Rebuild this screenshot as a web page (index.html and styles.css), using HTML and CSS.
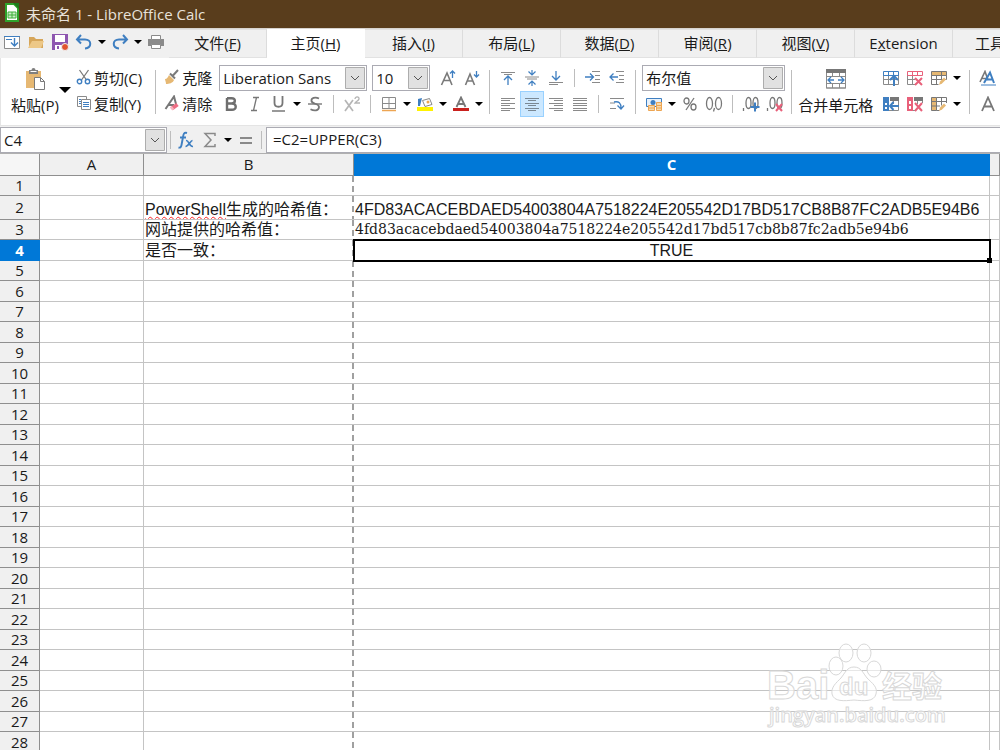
FILE: index.html
```
<!DOCTYPE html>
<html lang="zh-CN">
<head>
    <meta charset="UTF-8">
    <meta name="viewport" content="width=device-width, initial-scale=1.0">
    <title>未命名 1 - LibreOffice Calc</title>
    <link rel="stylesheet" href="styles.css">
</head>
<body>
    <header class="titlebar">
        <svg class="app-icon" width="14" height="20" viewBox="0 0 14 20">
            <path d="M1 1h8l4 4v13H1z" fill="#fff" stroke="#2fa32b" stroke-width="2"/>
            <path d="M8 0h6v6z" fill="#1f7a1c"/>
            <path d="M3 9h8v6H3z" fill="#c9efc5"/>
            <path d="M3 9h8v6H3zM3 12h8M7 9v6" fill="none" stroke="#3faf3a"/>
        </svg>
        <span>未命名 1 - LibreOffice Calc</span>
    </header>

    <div class="tabbar">
        <div class="quick">
            <button class="qbtn" aria-label="菜单栏">
                <svg width="18" height="18" viewBox="0 0 18 18" fill="none"><path d="M1.500 3.500h15v12h-15z" stroke="#8a8a8a" fill="#fff"/><path d="M1 3.500h16M3 6.500h6" stroke="#3f7fc1"/><path d="M11.500 5v8M8 9.500l3.500 3.500L15 9.500" stroke="#3f7fc1" stroke-width="1.400"/></svg>
            </button>
            <button class="qbtn" aria-label="打开">
                <svg width="18" height="18" viewBox="0 0 18 18"><path d="M2 4h5l2 2h7v9H2z" fill="#d6a65a"/><path d="M5 8h12l-3 7H1z" fill="#edc887"/></svg>
            </button>
            <button class="qbtn" aria-label="保存">
                <svg width="18" height="18" viewBox="0 0 18 18"><path d="M1 1h16v16H1z" fill="#8e56b0"/><path d="M4 2h10v7H4zM4 12h8v5H4z" fill="#fff"/><path d="M6 13h2v3H6z" fill="#8e56b0"/><circle cx="14" cy="14" r="3.500" fill="#e0532f" stroke="#f0f0f0"/></svg>
            </button>
            <button class="qbtn" aria-label="撤销">
                <svg width="18" height="18" viewBox="0 0 18 18" fill="none" stroke="#3f7fc1" stroke-width="2"><path d="M6 2L2 6.500l4 4M2 6.500h8c7 0 7 8.500 0 9"/></svg>
            </button>
            <button class="drop" aria-label="撤销选项"></button>
            <button class="qbtn" aria-label="恢复">
                <svg width="18" height="18" viewBox="0 0 18 18" fill="none" stroke="#3f7fc1" stroke-width="2"><path d="M12 2l4 4.500-4 4M16 6.500H8c-7 0-7 8.500 0 9"/></svg>
            </button>
            <button class="drop" aria-label="恢复选项"></button>
            <button class="qbtn" aria-label="打印">
                <svg width="18" height="18" viewBox="0 0 18 18"><path d="M1 6h16v7H1z" fill="#8a8a8a"/><path d="M4.500 2.500h9v4h-9zM4.500 11.500h9v4h-9z" fill="#fff" stroke="#8a8a8a"/></svg>
            </button>
        </div>
        <nav class="tabs">
            <a href="#">文件(<u>F</u>)</a>
            <a href="#" class="active">主页(<u>H</u>)</a>
            <a href="#">插入(<u>I</u>)</a>
            <a href="#">布局(<u>L</u>)</a>
            <a href="#">数据(<u>D</u>)</a>
            <a href="#">审阅(<u>R</u>)</a>
            <a href="#">视图(<u>V</u>)</a>
            <a href="#">E<u>x</u>tension</a>
            <a href="#" class="last">工具</a>
        </nav>
    </div>

    <div class="ribbon">
        <button class="big paste">
            <svg width="20" height="22" viewBox="0 0 20 22"><path d="M1 3h15v17H1z" fill="#e6b873"/><path d="M4 2h2.500a2 2 0 0 1 4 0H13v4H4z" fill="#7f7f7f"/><path d="M5.500 3.500h6" stroke="#fff"/><path d="M9.500 9.500h6l4 4v8h-10z" fill="#fff" stroke="#7a7a7a"/><path d="M15.500 9.500v4h4" fill="none" stroke="#7a7a7a"/></svg>
            <span>粘贴(P)</span>
        </button>
        <button class="drop large" aria-label="粘贴选项"></button>
        <div class="stack labels">
            <button class="text-tool">
                <svg width="16" height="16" viewBox="0 0 16 16" fill="none"><path d="M3.500 1l7 10M12.500 1l-7 10" stroke="#7a7a7a" stroke-width="1.300"/><circle cx="3.500" cy="12.500" r="2.200" stroke="#3f7fc1" stroke-width="1.400"/><circle cx="11.500" cy="12.500" r="2.200" stroke="#3f7fc1" stroke-width="1.400"/></svg>
                剪切(C)
            </button>
            <button class="text-tool">
                <svg width="16" height="16" viewBox="0 0 16 16" fill="none"><path d="M1.500 1.500h9v10h-9z" stroke="#8a8a8a"/><path d="M3 4.500h2M3 6.500h2M3 8.500h2" stroke="#3f7fc1"/><path d="M5.500 4.500h9v10h-9z" fill="#fff" stroke="#8a8a8a"/><path d="M7 7.500h6M7 9.500h6M7 11.500h6" stroke="#3f7fc1"/></svg>
                复制(Y)
            </button>
        </div>
        <span class="sep tall wide"></span>
        <div class="stack">
            <button class="text-tool">
                <svg width="16" height="16" viewBox="0 0 16 16"><path d="M14 1L9 6.500M6 4.500l5 5" stroke="#7a7a7a" stroke-width="2"/><path d="M5 6l5 5c-1 3-5 4-8 4 0-2-1-4-1-5 2 0 3-2 4-4z" fill="#e6b873"/></svg>
                克隆
            </button>
            <button class="text-tool">
                <svg width="16" height="16" viewBox="0 0 16 16" fill="none"><path d="M1.500 14L10 1.500 12 9M4 10h6" stroke="#777" stroke-width="2"/><path d="M8 13.500l5.500-4" stroke="#ed6d83" stroke-width="4"/><path d="M7 14l2-1.500" stroke="#f6b4be" stroke-width="4"/></svg>
                清除
            </button>
        </div>

        <div class="stack font-group">
            <div class="row">
                <select class="combo font-name" aria-label="字体名称"><option>Liberation Sans</option></select>
                <select class="combo font-size" aria-label="字号"><option>10</option></select>
                <button class="tool" aria-label="增大字号">
                    <svg width="16" height="16" viewBox="0 0 16 16" fill="none"><path d="M1.500 15L7 3l5 12M4 10.500h6.500" stroke="#7a7a7a" stroke-width="1.600"/><path d="M12.500 8V1M10 3.500L12.500 1 15 3.500" stroke="#3f7fc1" stroke-width="1.300"/></svg>
                </button>
                <button class="tool" aria-label="减小字号">
                    <svg width="16" height="16" viewBox="0 0 16 16" fill="none"><path d="M1.500 15L6 4l4.500 11M3.500 11h5.500" stroke="#7a7a7a" stroke-width="1.600"/><path d="M12.500 1v6M10 4.500L12.500 7 15 4.500" stroke="#3f7fc1" stroke-width="1.300"/></svg>
                </button>
            </div>
            <div class="row">
                <button class="tool" aria-label="粗体"><svg width="16" height="16" viewBox="0 0 16 16" fill="none" stroke="#6f6f6f" stroke-width="2.400"><path d="M4 2.200h4.500c4.500 0 4.500 5.300 0 5.300H4h5c5 0 5 6.300 0 6.300H4V2"/></svg></button>
                <button class="tool" aria-label="斜体"><svg width="16" height="16" viewBox="0 0 16 16" fill="none" stroke="#777" stroke-width="1.300"><path d="M6 1.500h6M4 14.500h6M9.500 1.500l-3 13"/></svg></button>
                <button class="tool" aria-label="下划线"><svg width="16" height="16" viewBox="0 0 16 16" fill="none" stroke="#777"><path d="M3.500 0v7c0 5 8 5 8 0V0" stroke-width="1.800"/><path d="M1 15h13" stroke-width="1.500"/></svg></button>
                <button class="drop" aria-label="下划线样式"></button>
                <button class="tool" aria-label="删除线"><svg width="16" height="16" viewBox="0 0 16 16" fill="none" stroke="#777"><path d="M12 2.500C8 .5 4 2 4.500 5c.5 3.500 7.500 2 7.500 6 0 4-5 4-8.500 2.300" stroke-width="1.800"/><path d="M1 8h14" stroke-width="1.400"/></svg></button>
                <span class="sep"></span>
                <button class="tool" aria-label="上标"><svg width="18" height="16" viewBox="0 0 18 16" fill="none" stroke="#b5b5b5" stroke-width="1.700"><path d="M2 4l8 11M10 4L2 15"/><path d="M12 3c0-3 4.500-2.500 4 0-.3 1.500-3 2.500-4 4h5" stroke-width="1.300"/></svg></button>
                <span class="sep"></span>
                <button class="tool" aria-label="边框"><svg width="16" height="16" viewBox="0 0 16 16" fill="none"><path d="M1.500 1.500h13V13M1.500 1.500V13M1 7.500h14M8 2v11M1 12.500h14" stroke="#8a8a8a"/><path d="M1 14.500h14" stroke="#eda552" stroke-width="1.500"/></svg></button>
                <button class="drop" aria-label="边框选项"></button>
                <button class="tool" aria-label="背景色"><svg width="16" height="16" viewBox="0 0 16 16"><path d="M5.500 4.500l7-2 2.500 6-7 2z" fill="#fff" stroke="#888"/><path d="M1 3l4-1-2 8H1z" fill="#3f7fc1"/><circle cx="11" cy="6" r="1.500" fill="#eda552"/><path d="M0 11h16v4H0z" fill="#fff200"/></svg></button>
                <button class="drop" aria-label="背景色选项"></button>
                <button class="tool" aria-label="字体颜色"><svg width="16" height="16" viewBox="0 0 16 16" fill="none"><path d="M3.500 11L8 1.500 12.500 11M5 8h6" stroke="#777" stroke-width="1.800"/><path d="M0 13.500h16" stroke="#c9211e" stroke-width="3"/></svg></button>
                <button class="drop" aria-label="字体颜色选项"></button>
            </div>
        </div>
        <span class="sep tall tight"></span>

        <div class="stack">
            <div class="row">
                <button class="tool" aria-label="顶端对齐"><svg width="16" height="16" viewBox="0 0 16 16" fill="none"><path d="M1 2.500h14M4 4.500h8" stroke="#8a8a8a"/><path d="M8 15V6M4 10l4-4 4 4" stroke="#3f7fc1" stroke-width="1.300"/></svg></button>
                <button class="tool" aria-label="垂直居中"><svg width="16" height="16" viewBox="0 0 16 16" fill="none"><path d="M1 7h14M3 9h10" stroke="#8a8a8a"/><path d="M8 0v5M4.500 1.500L8 5l3.500-3.500M8 16v-5M4.500 14.500L8 11l3.500 3.500" stroke="#3f7fc1" stroke-width="1.200"/></svg></button>
                <button class="tool" aria-label="底端对齐"><svg width="16" height="16" viewBox="0 0 16 16" fill="none"><path d="M1 12.500h14M1 14.500h9" stroke="#8a8a8a"/><path d="M8 1v9M4 6l4 4 4-4" stroke="#3f7fc1" stroke-width="1.300"/></svg></button>
                <span class="sep"></span>
                <button class="tool" aria-label="增加缩进"><svg width="16" height="16" viewBox="0 0 16 16" fill="none"><path d="M7 1.500h8M10 5.500h5M10 9.500h5M7 12.500h8" stroke="#8a8a8a"/><path d="M0 7h8M5 3.500L8.500 7 5 10.500" stroke="#3f7fc1" stroke-width="1.300"/></svg></button>
                <button class="tool" aria-label="减少缩进"><svg width="16" height="16" viewBox="0 0 16 16" fill="none"><path d="M7 1.500h8M10 5.500h5M10 9.500h5M7 12.500h8" stroke="#8a8a8a"/><path d="M9 7H1M4.500 3.500L1 7l3.500 3.500" stroke="#3f7fc1" stroke-width="1.300"/></svg></button>
            </div>
            <div class="row">
                <button class="tool" aria-label="左对齐"><svg width="16" height="16" viewBox="0 0 16 16" stroke="#8a8a8a"><path d="M1 2.500h14M1 4.500h9M1 7.500h14M1 9.500h9M1 12.500h14M1 14.500h9"/></svg></button>
                <button class="tool pressed" aria-label="水平居中"><svg width="16" height="16" viewBox="0 0 16 16" stroke="#7a8894"><path d="M1 2.500h14M4 4.500h8M1 7.500h14M4 9.500h8M1 12.500h14M4 14.500h8"/></svg></button>
                <button class="tool" aria-label="右对齐"><svg width="16" height="16" viewBox="0 0 16 16" stroke="#8a8a8a"><path d="M1 2.500h14M6 4.500h9M1 7.500h14M6 9.500h9M1 12.500h14M6 14.500h9"/></svg></button>
                <button class="tool" aria-label="两端对齐"><svg width="16" height="16" viewBox="0 0 16 16" stroke="#8a8a8a"><path d="M1 2.500h14M1 4.500h14M1 7.500h14M1 9.500h14M1 12.500h14M1 14.500h14"/></svg></button>
                <span class="sep"></span>
                <button class="tool" aria-label="文本换行"><svg width="16" height="16" viewBox="0 0 16 16" fill="none"><path d="M1 2.500h14M1 12.500h6M1 7h5" stroke="#8a8a8a"/><path d="M5 6c5-1 7 1 7 6M8.500 9.500L12 13l3-3.500" stroke="#3f7fc1" stroke-width="1.300"/></svg></button>
            </div>
        </div>
        <span class="sep tall"></span>

        <div class="stack number-group">
            <select class="combo number-format" aria-label="数字格式"><option>布尔值</option></select>
            <div class="row">
                <button class="tool" aria-label="货币格式"><svg width="18" height="16" viewBox="0 0 18 16"><path d="M1.500 2.500h15v8h-15z" fill="#e8f1fa" stroke="#3f7fc1"/><circle cx="8" cy="6.500" r="2.500" fill="#3f7fc1"/><path d="M3.500 9.500h6v5h-6zM11.500 6.500h5v8h-5z" fill="#f7d9ab" stroke="#eda552"/><path d="M4 12h5M12 9.500h5M12 12h5" stroke="#eda552"/></svg></button>
                <button class="drop" aria-label="货币选项"></button>
                <button class="tool" aria-label="百分比"><svg width="16" height="16" viewBox="0 0 16 16" fill="none" stroke="#777" stroke-width="1.300"><ellipse cx="4.500" cy="5" rx="2.500" ry="3"/><ellipse cx="11.500" cy="11" rx="2.500" ry="3"/><path d="M12 2L4 14"/></svg></button>
                <button class="tool" aria-label="数字格式"><svg width="18" height="16" viewBox="0 0 18 16" fill="none" stroke="#777" stroke-width="1.300"><ellipse cx="4.500" cy="7.500" rx="3" ry="6"/><ellipse cx="13.500" cy="7.500" rx="3" ry="6"/><path d="M9.500 12l-1 3.500"/></svg></button>
                <span class="sep"></span>
                <button class="tool" aria-label="添加小数位"><svg width="18" height="16" viewBox="0 0 18 16" fill="none" stroke="#777" stroke-width="1.300"><ellipse cx="6.500" cy="7" rx="2.500" ry="5.500"/><ellipse cx="13.500" cy="7" rx="2.500" ry="5.500"/><path d="M1.500 12v3"/><path d="M13 6.500v9M8.500 11h9" stroke="#3f7fc1" stroke-width="2"/></svg></button>
                <button class="tool" aria-label="删除小数位"><svg width="18" height="16" viewBox="0 0 18 16" fill="none" stroke="#777" stroke-width="1.300"><ellipse cx="6.500" cy="7" rx="2.500" ry="5.500"/><ellipse cx="13.500" cy="7" rx="2.500" ry="5.500"/><path d="M1.500 12v3"/><path d="M10 8l6 7M16 8l-6 7" stroke="#e8607a" stroke-width="2"/></svg></button>
            </div>
        </div>
        <span class="sep tall tight"></span>

        <button class="big merge">
            <svg width="20" height="22" viewBox="0 0 20 22" fill="none"><path d="M0 1h20v4H0z" fill="#777"/><path d="M.500 5v15h19V5M6.500 5v3M13.500 5v3M0 8.500h20M0 15.500h20M6.500 15.500V20M13.500 15.500V20M0 20h20" stroke="#8a8a8a"/><path d="M2 12h6M12 12h6M5 9l-3 3 3 3M15 9l3 3-3 3" stroke="#3f7fc1" stroke-width="1.300"/></svg>
            <span>合并单元格</span>
        </button>
        <div class="stack table-tools">
            <div class="row">
                <button class="tool" aria-label="在上方插入行"><svg width="16" height="16" viewBox="0 0 16 16" fill="none"><path d="M.500 5v9.500h15V5M5.500 5v10M10.500 5v10M0 9.500h16" stroke="#8a8a8a"/><path d="M.500 1.500h15v4H.500zM5.500 1.500v4M10.500 1.500v4" stroke="#3f7fc1"/><path d="M11 16V6M7 10l4-4 4 4" stroke="#3f7fc1" stroke-width="2"/></svg></button>
                <button class="tool" aria-label="删除行"><svg width="16" height="16" viewBox="0 0 16 16" fill="none"><path d="M.500 5v9.500H8M5.500 5v10M0 9.500h8" stroke="#8a8a8a"/><path d="M.500 1.500h15v4H.500zM5.500 1.500v4M10.500 1.500v4" stroke="#e8607a"/><path d="M8 8l7 7M15 8l-7 7" stroke="#e8607a" stroke-width="2"/></svg></button>
                <button class="tool" aria-label="选择行"><svg width="16" height="16" viewBox="0 0 16 16" fill="none"><path d="M.500 1.500h15v4H.500z" fill="#e6b873" stroke="#777"/><path d="M.500 5.500h15v4H.500zM.500 9.500v5h7M5.500 5v9M10.500 2v7" stroke="#777"/><path d="M8 15l1-3.500 4-4 2 2-4 4z" fill="#e6b873"/></svg></button>
                <button class="drop" aria-label="行选项"></button>
            </div>
            <div class="row">
                <button class="tool" aria-label="在左侧插入列"><svg width="16" height="16" viewBox="0 0 16 16" fill="none"><path d="M0 1h6v14H0z" fill="#3f7fc1"/><path d="M2 7h2v2H2zM2 11h2v2H2z" fill="#fff"/><path d="M7 1h9v4H7z" fill="#777"/><path d="M6 14.500h9.500V5M10.500 5v3" stroke="#8a8a8a"/><path d="M16 10H7M10.500 6L7 10l3.500 4" stroke="#3f7fc1" stroke-width="2"/></svg></button>
                <button class="tool" aria-label="删除列"><svg width="16" height="16" viewBox="0 0 16 16" fill="none"><path d="M0 1h6v14H0z" fill="#e8607a"/><path d="M2 5h2v3H2zM2 10h2v3H2z" fill="#fff"/><path d="M7 1h9v4H7z" fill="#777"/><path d="M6 14.500h3M15.500 5v2M10.500 5v3" stroke="#8a8a8a"/><path d="M8 7l7 8M15 7l-7 8" stroke="#e8607a" stroke-width="2"/></svg></button>
                <button class="tool" aria-label="选择列"><svg width="16" height="16" viewBox="0 0 16 16" fill="none"><path d="M.500 1.500h5v13h-5z" fill="#e6b873" stroke="#777"/><path d="M5.500 1.500h10V7M10.500 1.500v8M0 5.500h16M0 10h9M5.500 14.500h3" stroke="#777"/><path d="M8 15l1-3.500 4-4 2 2-4 4z" fill="#e6b873"/></svg></button>
                <button class="drop" aria-label="列选项"></button>
            </div>
        </div>
        <span class="sep tall"></span>
        <div class="stack">
            <div class="row">
                <button class="tool" aria-label="样式"><svg width="18" height="16" viewBox="0 0 18 16" fill="none"><path d="M1 12L6 1.500 9 10M3 8.500h5" stroke="#777" stroke-width="1.600"/><path d="M5 13L11 2.500 15 13M7 9.500h7" stroke="#3f7fc1" stroke-width="2"/><path d="M2 15h15" stroke="#3f7fc1"/></svg></button>
                <input class="style-box" type="text" aria-label="单元格样式">
            </div>
            <div class="row">
                <button class="tool" aria-label="字符"><svg width="16" height="16" viewBox="0 0 16 16" fill="none"><path d="M2 15L8 1.500 14 15M4 10.500h8" stroke="#777" stroke-width="1.800"/></svg></button>
            </div>
        </div>
    </div>

    <div class="formulabar">
        <select class="combo name-box" aria-label="名称框"><option>C4</option></select>
        <span class="sep"></span>
        <button class="tool" aria-label="函数向导"><svg width="18" height="18" viewBox="0 0 18 18" fill="none" stroke="#3f7fc1"><path d="M10 2C7 1 6.500 3 6 6l-1.500 8c-.5 2.500-1.500 3-3 2.500M3 6.500h6" stroke-width="1.900"/><path d="M9 9.500c3-.5 3 6.500 7 6M15.500 9.500c-2 0-4 6-7 6" stroke-width="1.700"/></svg></button>
        <button class="tool" aria-label="求和"><svg width="16" height="16" viewBox="0 0 16 16" fill="none" stroke="#8a8a8a" stroke-width="1.500"><path d="M13 4V1.500H3L9 8l-6 6.500h10V12"/></svg></button>
        <button class="drop" aria-label="求和选项"></button>
        <button class="tool" aria-label="公式"><svg width="16" height="16" viewBox="0 0 16 16" stroke="#8a8a8a" stroke-width="2"><path d="M2 6h12M2 11h12"/></svg></button>
        <span class="sep"></span>
        <input class="formula" type="text" aria-label="编辑栏" value="=C2=UPPER(C3)">
    </div>

    <main class="sheet-area">
        <table class="sheet">
            <colgroup>
                <col class="col-head">
                <col class="col-a">
                <col class="col-b">
                <col class="col-c">
                <col>
            </colgroup>
            <thead>
                <tr>
                    <th></th>
                    <th>A</th>
                    <th>B</th>
                    <th class="selected">C</th>
                    <th></th>
                </tr>
            </thead>
            <tbody id="rows">
                <tr><th>1</th><td></td><td></td><td></td><td></td></tr>
                <tr class="high"><th>2</th><td></td><td><span class="misspelled">PowerShell</span>生成的哈希值：</td><td>4FD83ACACEBDAED54003804A7518224E205542D17BD517CB8B87FC2ADB5E94B6</td><td></td></tr>
                <tr><th>3</th><td></td><td>网站提供的哈希值：</td><td class="serif">4fd83acacebdaed54003804a7518224e205542d17bd517cb8b87fc2adb5e94b6</td><td></td></tr>
                <tr><th class="selected">4</th><td></td><td>是否一致：</td><td class="cursor">TRUE</td><td></td></tr>
            </tbody>
        </table>
        <svg class="watermark" width="190" height="90" viewBox="0 0 190 90">
            <g class="mark">
                <text class="mark-logo" x="1" y="59">Bai</text>
                <ellipse cx="80" cy="13" rx="7" ry="9"/>
                <ellipse cx="98" cy="13" rx="7" ry="9"/>
                <ellipse cx="70" cy="26" rx="7" ry="9"/>
                <ellipse cx="108" cy="29" rx="7" ry="8"/>
                <path d="M88 27c7 0 9 6 13 11 5 5 11 9 9 16-2 8-12 7-22 6-10 1-20 2-22-6-1-7 4-11 9-16 4-5 6-11 13-11z"/>
                <text class="mark-du" x="73" y="55">du</text>
                <text class="mark-cn" x="116" y="57">经验</text>
                <text class="mark-url" x="3" y="82">jingyan.baidu.com</text>
            </g>
        </svg>
    </main>

    <script>
        // Filas vacías hasta el final de la ventana
        const rows = document.getElementById('rows');
        for (let i = 5; i <= 28; i++) {
            const tr = document.createElement('tr');
            tr.innerHTML = `<th>${i}</th><td></td><td></td><td></td><td></td>`;
            rows.appendChild(tr);
        }
    </script>
</body>
</html>
```
FILE: styles.css
```
* {
    box-sizing: border-box;
}
body {
    margin: 0;
    height: 100vh;
    display: flex;
    flex-direction: column;
    overflow: hidden;
    background: #f0f0f0;
    color: #1a1a1a;
    font-family: "Open Sans", "Noto Sans CJK SC", sans-serif;
    font-size: 15px;
}
button, select, input {
    font: inherit;
    color: inherit;
    margin: 0;
    padding: 0;
}
button {
    background: none;
    border: none;
}
svg {
    display: block;
    flex: none;
}

/* Barra de título */
.titlebar {
    display: flex;
    align-items: center;
    gap: 7px;
    height: 28px;
    flex: none;
    padding: 0 0 2px 5px;
    background: #593d1c;
    color: #e8e2da;
}

/* Pestañas */
.tabbar {
    display: flex;
    flex: none;
    height: 30px;
    border-top: 1px solid #d8d4cf;
    overflow: hidden;
}
.quick {
    display: flex;
    align-items: center;
    width: 169px;
    flex: none;
    padding-bottom: 4px;
}
.qbtn {
    width: 24px;
    display: flex;
    justify-content: center;
}
.tabs {
    display: flex;
    flex: none;
}
.tabs a {
    width: 98px;
    display: flex;
    align-items: center;
    justify-content: center;
    padding-bottom: 2px;
    border-right: 1px solid #dcdcdc;
    border-bottom: 1px solid #e2e2e2;
    border-top: 1px solid #e2e2e2;
    color: #1a1a1a;
    text-decoration: none;
}
.tabs a.active {
    background: #fff;
    border-color: #fff;
}
.tabs a.last {
    justify-content: flex-start;
    padding-left: 22px;
}

/* Cinta */
.ribbon {
    display: flex;
    align-items: flex-start;
    flex: none;
    height: 68px;
    padding: 7px 0 0 10px;
    background: #fff;
    border-left: 1px solid #e4e4e4;
    border-bottom: 1px solid #e4e4e4;
    overflow: hidden;
}
.stack {
    display: flex;
    flex-direction: column;
    flex: none;
}
.row {
    display: flex;
    align-items: center;
    height: 26px;
}
.labels {
    margin-left: 5px;
}
.big {
    display: flex;
    flex-direction: column;
    align-items: center;
    gap: 3px;
    flex: none;
    padding-top: 3px;
    line-height: 24px;
    white-space: nowrap;
}
.text-tool {
    display: flex;
    align-items: center;
    gap: 2px;
    height: 26px;
    padding-bottom: 2px;
    white-space: nowrap;
}
.tool {
    display: flex;
    align-items: center;
    justify-content: center;
    width: 24px;
    height: 26px;
    flex: none;
}
.pressed {
    background: #cce8ff;
    border: 1px solid #99d1ff;
}
.drop {
    width: 12px;
    height: 24px;
    flex: none;
    display: flex;
    align-items: center;
    justify-content: center;
}
.drop::before {
    content: "";
    border: 4px solid transparent;
    border-top-color: #000;
    border-bottom: none;
}
.drop.large {
    height: 50px;
}
.drop.large::before {
    border-width: 6px;
    border-bottom: none;
}
.sep {
    width: 1px;
    height: 18px;
    margin: 0 6px;
    flex: none;
    background: #bdbdbd;
}
.sep.tall {
    height: 44px;
    margin-top: 5px;
}
.sep.tight {
    margin-left: 4px;
}
.sep.wide {
    margin-left: 13px;
    margin-right: 8px;
}
.font-group {
    margin-left: 7px;
}
.combo {
    appearance: none;
    height: 26px;
    padding-left: 3px;
    border: 1px solid #ababb3;
    border-radius: 0;
    background: #fff;
    background-image:
        url("data:image/svg+xml,%3Csvg xmlns='http://www.w3.org/2000/svg' width='20' height='22'%3E%3Cpath d='M.5.500h19v21H.5z' fill='%23e1e1e1' stroke='%23adadad'/%3E%3Cpath d='M6 9l4 4 4-4' fill='none' stroke='%23555'/%3E%3C/svg%3E");
    background-repeat: no-repeat;
    background-position: right 1px center;
}
.font-name {
    width: 148px;
    margin-right: 5px;
}
.font-size {
    width: 58px;
    margin-right: 6px;
}
.number-format {
    width: 143px;
}
.merge {
    margin-right: 6px;
}
.style-box {
    width: 120px;
    height: 26px;
    border: 1px solid #ababb3;
}

/* Barra de fórmulas */
.formulabar {
    display: flex;
    align-items: center;
    flex: none;
    height: 27px;
}
.formulabar .sep {
    margin: 0 3px;
}
.name-box {
    width: 167px;
}
.formula {
    flex: 1;
    height: 26px;
    margin-left: 1px;
    padding: 0 0 2px 6px;
    border: 1px solid #ababb3;
    border-right: none;
    background: #fff;
}

/* Hoja */
.sheet-area {
    position: relative;
    flex: 1;
    overflow: hidden;
    background: #fff;
    border-top: 1px solid #b0b0b0;
}
.sheet {
    width: 100%;
    table-layout: fixed;
    border-collapse: separate;
    border-spacing: 0;
}
.col-head {
    width: 40px;
}
.col-a {
    width: 104px;
}
.col-b {
    width: 210px;
}
.col-c {
    width: 636px;
}
.sheet th {
    padding: 0;
    background: #f0f0f0;
    border-right: 1px solid #8f8f8f;
    border-bottom: 1px solid #8f8f8f;
    font-weight: normal;
    line-height: 19px;
}
.sheet thead th {
    height: 22px;
}
.sheet thead th:first-child {
    background: #f6f6f6;
}
.sheet th.selected {
    background: #0078d7;
    border-color: #0078d7;
    color: #fff;
    font-weight: bold;
}
.sheet tbody tr {
    height: 20px;
}
.sheet tbody tr:nth-child(even) {
    height: 21px;
}
.sheet tbody tr.high {
    height: 24px;
}
.sheet td {
    padding: 0 1px;
    border-right: 1px solid #c4c4c4;
    border-bottom: 1px solid #c4c4c4;
    font-family: "Liberation Sans", "Noto Sans CJK SC", sans-serif;
    font-size: 16px;
    line-height: 19px;
    white-space: nowrap;
    overflow: hidden;
    vertical-align: bottom;
}
/* Salto de página entre B y C */
.sheet td:nth-child(3) {
    border-right: none;
    background: repeating-linear-gradient(#a0a0a0 0 6px, #fff 6px 10px) right / 2px 100% no-repeat;
}
.sheet td.serif {
    font-family: "DejaVu Serif", serif;
    font-size: 14px;
}
.sheet td.cursor {
    position: relative;
    overflow: visible;
    text-align: center;
    outline: 2px solid #000;
    outline-offset: -1px;
}
.cursor::after {
    content: "";
    position: absolute;
    right: -3px;
    bottom: -3px;
    width: 5px;
    height: 5px;
    background: #000;
}
.misspelled {
    text-decoration: underline wavy #f22 1px;
    text-underline-offset: 1px;
    text-decoration-skip-ink: none;
}

/* Marca de agua */
.watermark {
    position: absolute;
    right: 44px;
    bottom: 20px;
}
.mark {
    fill: #fff;
    fill-opacity: 0.6;
    stroke: #d8d8d8;
    stroke-width: 1;
    font-family: "Liberation Sans", "Noto Sans CJK SC", sans-serif;
}
.mark-logo {
    font-size: 40px;
    font-weight: bold;
}
.mark-du {
    font-size: 24px;
    font-weight: bold;
}
.mark-cn {
    font-size: 30px;
    font-weight: bold;
}
.mark-url {
    font-family: "Open Sans", sans-serif;
    font-size: 20px;
    font-weight: 600;
}
```
